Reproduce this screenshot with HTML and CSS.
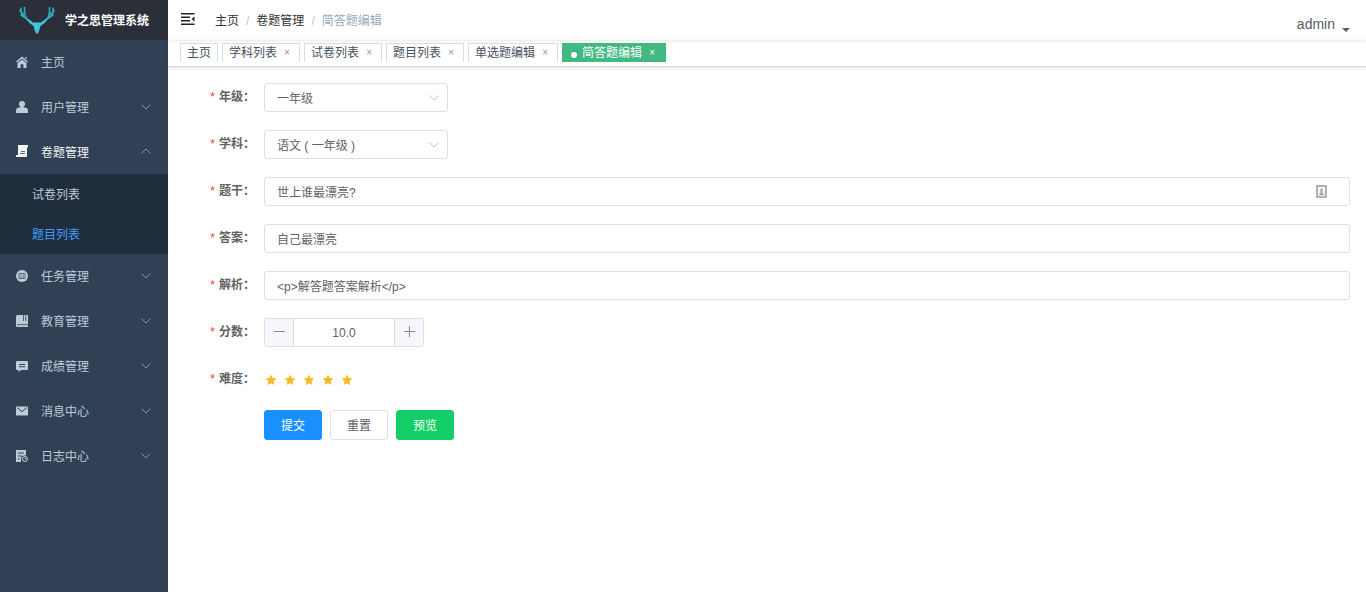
FILE: index.html
```html
<!DOCTYPE html>
<html lang="zh-CN">
<head>
  <meta charset="UTF-8">
  <meta name="viewport" content="width=device-width, initial-scale=1.0">
  <title>学之思管理系统</title>
  <link rel="stylesheet" href="styles.css">
</head>
<body>
  <svg class="sprite" aria-hidden="true">
    <symbol id="arrow" viewBox="0 0 10 6"><path d="M.5.5 5 5 9.5.5" fill="none" stroke="currentColor"/></symbol>
    <symbol id="star" viewBox="0 0 12 12"><path d="M6 .6 7.6 4.1l3.8.5-2.8 2.6.8 3.9L6 9.2l-3.4 1.9.8-3.9L.6 4.6l3.8-.5z" fill="currentColor"/></symbol>
  </svg>
  <div class="app">
    <aside class="sidebar">
      <a class="logo" href="#">
        <svg class="logo-img" viewBox="0 0 36 30" aria-hidden="true">
          <g fill="none" stroke="#2fa9bf" stroke-width="1.6" stroke-linecap="round">
            <path d="M2 3v4l3 5 7 5M5.500 2.500v5l1.500 5.500M2 7.500 5 9M1 5.500l1 2M5 12l-3-2"/>
            <path d="M34 3v4l-3 5-7 5M30.500 2.500v5L29 13M34 7.500 31 9M35 5.500l-1 2M31 12l3-2"/>
          </g>
          <path d="m5.500 11.500 8.500 6h8l8.500-6-5 6.500-4 3-1.500 5-1 2.500h-2L16 26l-1.500-5-4-3z" fill="#3fc6df"/>
        </svg>
        <h1>学之思管理系统</h1>
      </a>
      <nav>
        <a class="menu-item" href="#">
          <svg class="icon" viewBox="0 0 12 12"><path d="M6 .5 12 5.6l-.8.9L6 2.400.8 6.500 0 5.600zM9 1h1.500v2.200L9 2zM6 3.400l4.500 3.500V12H7.400V8.200H4.600V12H1.500V6.900z" fill="currentColor"/></svg>
          <span>主页</span>
        </a>
        <button class="menu-item">
          <svg class="icon" viewBox="0 0 12 12"><path d="M6 0a3 3 0 0 1 1.700 5.500V6.500h1.800Q12 6.800 12 9.500V12H0V9.500Q0 6.800 2.500 6.500h1.800V5.500A3 3 0 0 1 6 0z" fill="currentColor"/></svg>
          <span>用户管理</span>
          <svg class="arrow"><use href="#arrow"/></svg>
        </button>
        <button class="menu-item open" aria-expanded="true">
          <svg class="icon" viewBox="0 0 12 12"><path d="M2 0H12v2.500h-1V11q0 1-1 1H0v-2h2z" fill="currentColor"/><path d="M5 6h4v.8H5zM4 8h5v.8H4z" fill="#304156"/></svg>
          <span>卷题管理</span>
          <svg class="arrow"><use href="#arrow"/></svg>
        </button>
        <div class="submenu">
          <a href="#">试卷列表</a>
          <a href="#" class="active">题目列表</a>
        </div>
        <button class="menu-item">
          <svg class="icon" viewBox="0 0 12 12"><circle cx="6" cy="6" r="6" fill="currentColor"/><path d="M3 3.500h6v5H3zM4 5h1.200M6.800 5H8M4 7h4" fill="none" stroke="#304156" stroke-width=".7"/></svg>
          <span>任务管理</span>
          <svg class="arrow"><use href="#arrow"/></svg>
        </button>
        <button class="menu-item">
          <svg class="icon" viewBox="0 0 12 12"><path d="M1.500 0H12v12H1.500Q0 12 0 10.500v-9Q0 0 1.500 0z" fill="currentColor"/><path d="M1 9.700h11M7.500 0v6M9.800 0v6" fill="none" stroke="#304156" stroke-width=".8"/></svg>
          <span>教育管理</span>
          <svg class="arrow"><use href="#arrow"/></svg>
        </button>
        <button class="menu-item">
          <svg class="icon" viewBox="0 0 12 12"><path fill-rule="evenodd" d="M1 1h10q1 0 1 1v7q0 1-1 1H5l-2.500 2V10H1q-1 0-1-1V2q0-1 1-1zm2 3v1h6V4zm0 2.200v1h6v-1z" fill="currentColor"/></svg>
          <span>成绩管理</span>
          <svg class="arrow"><use href="#arrow"/></svg>
        </button>
        <button class="menu-item">
          <svg class="icon" viewBox="0 0 12 12"><path d="M0 1.500h12v9H0z" fill="currentColor"/><path d="m1 2.500 5 4.200 5-4.200" fill="none" stroke="#304156"/></svg>
          <span>消息中心</span>
          <svg class="arrow"><use href="#arrow"/></svg>
        </button>
        <button class="menu-item">
          <svg class="icon" viewBox="0 0 12 12"><path fill-rule="evenodd" d="M0 0h10v5.500H8.500A3.600 3.600 0 0 0 5 9v3H0zm1.800 2.500v1h6v-1zm0 3v1h4v-1zm0 3v1h2v-1z" fill="currentColor"/><circle cx="9" cy="9" r="2.500" fill="none" stroke="currentColor"/><path d="M9 7.500V9h1.500" fill="none" stroke="currentColor" stroke-width=".8"/></svg>
          <span>日志中心</span>
          <svg class="arrow"><use href="#arrow"/></svg>
        </button>
      </nav>
    </aside>

    <div class="main">
      <header class="navbar">
        <button class="hamburger" aria-label="收起菜单">
          <svg viewBox="0 0 14 12"><path d="M0 0h13.500v1.600H0zM0 3.600h9v1.400H0zM0 7h9v1.400H0zM0 10.400h13.500V12H0zM13.500 3.500v5L10.500 6z" fill="currentColor"/></svg>
        </button>
        <nav class="breadcrumb">
          <a href="#">主页</a><i>/</i><a href="#">卷题管理</a><i>/</i><span>简答题编辑</span>
        </nav>
        <button class="user">admin<span class="caret"></span></button>
      </header>

      <nav class="tags">
        <a class="tag" href="#">主页</a>
        <a class="tag" href="#">学科列表<span class="close">×</span></a>
        <a class="tag" href="#">试卷列表<span class="close">×</span></a>
        <a class="tag" href="#">题目列表<span class="close">×</span></a>
        <a class="tag" href="#">单选题编辑<span class="close">×</span></a>
        <a class="tag active" href="#">简答题编辑<span class="close">×</span></a>
      </nav>

      <form class="edit-form">
        <div class="form-item">
          <label class="form-label" for="grade">年级：</label>
          <div class="select">
            <select id="grade"><option>一年级</option></select>
            <svg class="arrow"><use href="#arrow"/></svg>
          </div>
        </div>
        <div class="form-item">
          <label class="form-label" for="subject">学科：</label>
          <div class="select">
            <select id="subject"><option>语文 ( 一年级 )</option></select>
            <svg class="arrow"><use href="#arrow"/></svg>
          </div>
        </div>
        <div class="form-item">
          <label class="form-label" for="title">题干：</label>
          <div class="field">
            <input type="text" id="title" value="世上谁最漂亮?">
            <svg class="field-icon" viewBox="0 0 11 13"><path d="M1 1h9v11H1z" fill="#f4f4f4" stroke="#999" stroke-width="1.500"/><path d="M5.500 3 7 5.500H4zM4 6.500h3v1H4zM3.500 8.500h4v1.500h-4z" fill="#888"/></svg>
          </div>
        </div>
        <div class="form-item">
          <label class="form-label" for="answer">答案：</label>
          <div class="field"><input type="text" id="answer" value="自己最漂亮"></div>
        </div>
        <div class="form-item">
          <label class="form-label" for="analyze">解析：</label>
          <div class="field"><input type="text" id="analyze" value="&lt;p&gt;解答题答案解析&lt;/p&gt;"></div>
        </div>
        <div class="form-item">
          <label class="form-label" for="score">分数：</label>
          <div class="number">
            <button type="button" aria-label="减少"><svg viewBox="0 0 11 11"><path d="M0 5.500h11" stroke="currentColor"/></svg></button>
            <input type="text" id="score" value="10.0">
            <button type="button" aria-label="增加"><svg viewBox="0 0 11 11"><path d="M0 5.500h11M5.500 0v11" stroke="currentColor"/></svg></button>
          </div>
        </div>
        <div class="form-item rate-item">
          <span class="form-label" id="rate-label">难度：</span>
          <div class="rate" role="radiogroup" aria-labelledby="rate-label">
            <label><input type="radio" name="rate" aria-label="1"><svg><use href="#star"/></svg></label>
            <label><input type="radio" name="rate" aria-label="2"><svg><use href="#star"/></svg></label>
            <label><input type="radio" name="rate" aria-label="3"><svg><use href="#star"/></svg></label>
            <label><input type="radio" name="rate" aria-label="4"><svg><use href="#star"/></svg></label>
            <label><input type="radio" name="rate" aria-label="5" checked><svg><use href="#star"/></svg></label>
          </div>
        </div>
        <div class="buttons">
          <button type="button" class="btn primary">提交</button>
          <button type="reset" class="btn">重置</button>
          <button type="button" class="btn success">预览</button>
        </div>
      </form>
    </div>
  </div>
</body>
</html>
```
FILE: styles.css
```css
* {
  box-sizing: border-box;
}
body {
  margin: 0;
  font-family: "Liberation Sans", "Noto Sans CJK SC", sans-serif;
  font-size: 12px;
  color: #606266;
  background: #fff;
}
a {
  color: inherit;
  text-decoration: none;
}
button,
input,
select {
  font: inherit;
  color: inherit;
}
button {
  padding: 0;
  border: none;
  background: none;
  cursor: pointer;
}
.sprite {
  display: none;
}
.app {
  display: flex;
  min-height: 100vh;
}

/* sidebar */
.sidebar {
  flex: none;
  width: 168px;
  background: #304156;
  color: #bfcbd9;
}
.logo {
  display: flex;
  align-items: center;
  gap: 10px;
  height: 40px;
  padding: 0 0 2px 19px;
  background: #2b2f3a;
  color: #fff;
}
.logo-img {
  width: 36px;
  height: 30px;
  margin-top: 2px;
}
.logo h1 {
  margin: 0;
  font-size: 12px;
  font-weight: bold;
}
.menu-item {
  display: flex;
  align-items: center;
  width: 100%;
  height: 45px;
  padding: 0 17px 2px 16px;
}
.menu-item .icon {
  width: 12px;
  height: 12px;
  margin-right: 13px;
}
.arrow {
  width: 10px;
  height: 6px;
  color: #848d98;
}
.menu-item .arrow {
  margin-left: auto;
}
.menu-item.open {
  height: 44px;
  color: #f4f4f5;
}
.open .arrow {
  transform: rotate(180deg);
}
.submenu {
  background: #1f2d3d;
}
.submenu a {
  display: block;
  height: 40px;
  padding-left: 32px;
  line-height: 42px;
}
.submenu .active {
  color: #409eff;
}

/* top bar */
.main {
  flex: 1;
  min-width: 0;
}
.navbar {
  display: flex;
  align-items: center;
  height: 40px;
  padding: 0 16px 2px 13px;
  box-shadow: 0 1px 3px rgba(0, 21, 41, 0.1);
}
.hamburger {
  display: flex;
  color: #222;
}
.hamburger svg {
  width: 14px;
  height: 12px;
}
.breadcrumb {
  display: flex;
  align-items: baseline;
  margin-left: 20px;
  color: #97a8be;
}
.breadcrumb a {
  color: #303133;
}
.breadcrumb i {
  margin: 0 7px;
  font-style: normal;
  color: #c0c4cc;
}
.user {
  display: flex;
  align-items: center;
  gap: 7px;
  margin-left: auto;
  padding-top: 10px;
  font-size: 14px;
  color: #5a5e66;
}
.caret {
  margin-top: 12px;
  border: 4px solid transparent;
  border-top-color: #5a5e66;
  border-bottom: none;
}
.tags {
  display: flex;
  gap: 4px;
  height: 27px;
  padding: 3px 12px 0;
  border-bottom: 1px solid #d8dce5;
  box-shadow: 0 1px 3px rgba(0, 0, 0, 0.12);
}
.tag {
  display: flex;
  align-items: center;
  height: 19px;
  padding: 0 6px;
  border: 1px solid #d8dce5;
  border-bottom: none;
  line-height: 20px;
  color: #495060;
}
.tag .close {
  width: 12px;
  margin-left: 4px;
  text-align: center;
  font-size: 10px;
  color: #909399;
}
.tag.active {
  padding-right: 7px;
  background: #42b983;
  border-color: #42b983;
  color: #fff;
}
.tag.active .close {
  color: #fff;
}
.tag.active::before {
  content: "";
  width: 6px;
  height: 6px;
  margin: 3px 5px 0 2px;
  border-radius: 50%;
  background: #fff;
}

/* form */
.edit-form {
  padding: 16px;
}
.form-item {
  display: flex;
  margin-bottom: 18px;
}
.form-label {
  width: 80px;
  padding-right: 9px;
  line-height: 28px;
  text-align: right;
  font-weight: bold;
}
.form-label::before {
  content: "*";
  margin-right: 4px;
  font-weight: normal;
  color: #f33;
}
.select,
.field {
  position: relative;
}
.field {
  flex: 1;
}
.select {
  width: 184px;
}
.select select,
.field input {
  display: block;
  width: 100%;
  height: 29px;
  padding: 0 12px;
  border: 1px solid #dcdfe6;
  border-radius: 3px;
  background: #fff;
  appearance: none;
}
.select select {
  padding-top: 2px;
}
.select .arrow {
  position: absolute;
  top: 12px;
  right: 9px;
  color: #c0c4cc;
}
.field-icon {
  position: absolute;
  top: 8px;
  right: 23px;
  width: 11px;
  height: 13px;
}
.number {
  display: flex;
  width: 160px;
  height: 29px;
  border: 1px solid #dcdfe6;
  border-radius: 3px;
  overflow: hidden;
}
.number button {
  display: flex;
  align-items: center;
  justify-content: center;
  width: 28px;
  padding-bottom: 2px;
  background: #f5f7fa;
}
.number svg {
  width: 11px;
  height: 11px;
  color: #85888e;
}
.number input {
  flex: 1;
  min-width: 0;
  padding: 0;
  border: solid #dcdfe6;
  border-width: 0 1px;
  text-align: center;
}
.rate-item {
  margin-bottom: 17px;
}
.rate {
  display: flex;
  align-items: center;
  gap: 7px;
  padding: 2px 0 0 1px;
}
.rate label {
  display: flex;
}
.rate input {
  position: absolute;
  opacity: 0;
}
.rate svg {
  width: 12px;
  height: 12px;
  color: #f7ba2a;
}
.buttons {
  display: flex;
  gap: 8px;
  padding-left: 80px;
}
.btn {
  height: 30px;
  padding: 0 16px 2px;
  border: 1px solid #dcdfe6;
  border-radius: 3px;
}
.btn.primary {
  background: #1890ff;
  border-color: #1890ff;
  color: #fff;
}
.btn.success {
  background: #13ce66;
  border-color: #13ce66;
  color: #fff;
}
```
